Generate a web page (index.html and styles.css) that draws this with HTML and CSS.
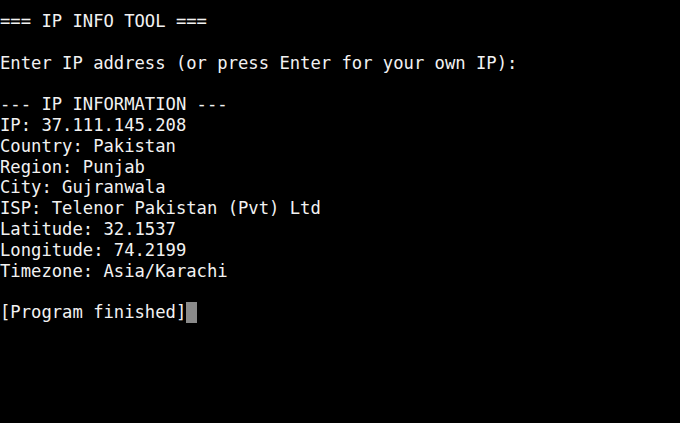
FILE: index.html
```html
<!DOCTYPE html>
<html>
<head>
<meta charset="utf-8">
<link rel="stylesheet" href="styles.css">
</head>
<body>
<div class="term">
<div class="line">=== IP INFO TOOL ===</div>
<div class="line"> </div>
<div class="line">Enter IP address (or press Enter for your own IP):</div>
<div class="line"> </div>
<div class="line">--- IP INFORMATION ---</div>
<div class="line">IP: 37.111.145.208</div>
<div class="line">Country: Pakistan</div>
<div class="line">Region: Punjab</div>
<div class="line">City: Gujranwala</div>
<div class="line">ISP: Telenor Pakistan (Pvt) Ltd</div>
<div class="line">Latitude: 32.1537</div>
<div class="line">Longitude: 74.2199</div>
<div class="line">Timezone: Asia/Karachi</div>
<div class="line"> </div>
<div class="line">[Program finished]<span class="cursor"> </span></div>
</div>
</body>
</html>
```
FILE: styles.css
```css
html, body {
  margin: 0;
  padding: 0;
  background: #000;
  width: 680px;
  height: 423px;
  overflow: hidden;
}
.term {
  padding: 11px 0 0 0;
  font-family: "DejaVu Sans Mono", monospace;
  font-size: 17.2px;
  line-height: 20.8px;
  color: #f2f2f2;
}
.line {
  height: 20.8px;
  white-space: pre;
}
.cursor {
  display: inline-block;
  width: 10.35px;
  height: 20.8px;
  vertical-align: top;
  background: #8a8a8a;
}
```
